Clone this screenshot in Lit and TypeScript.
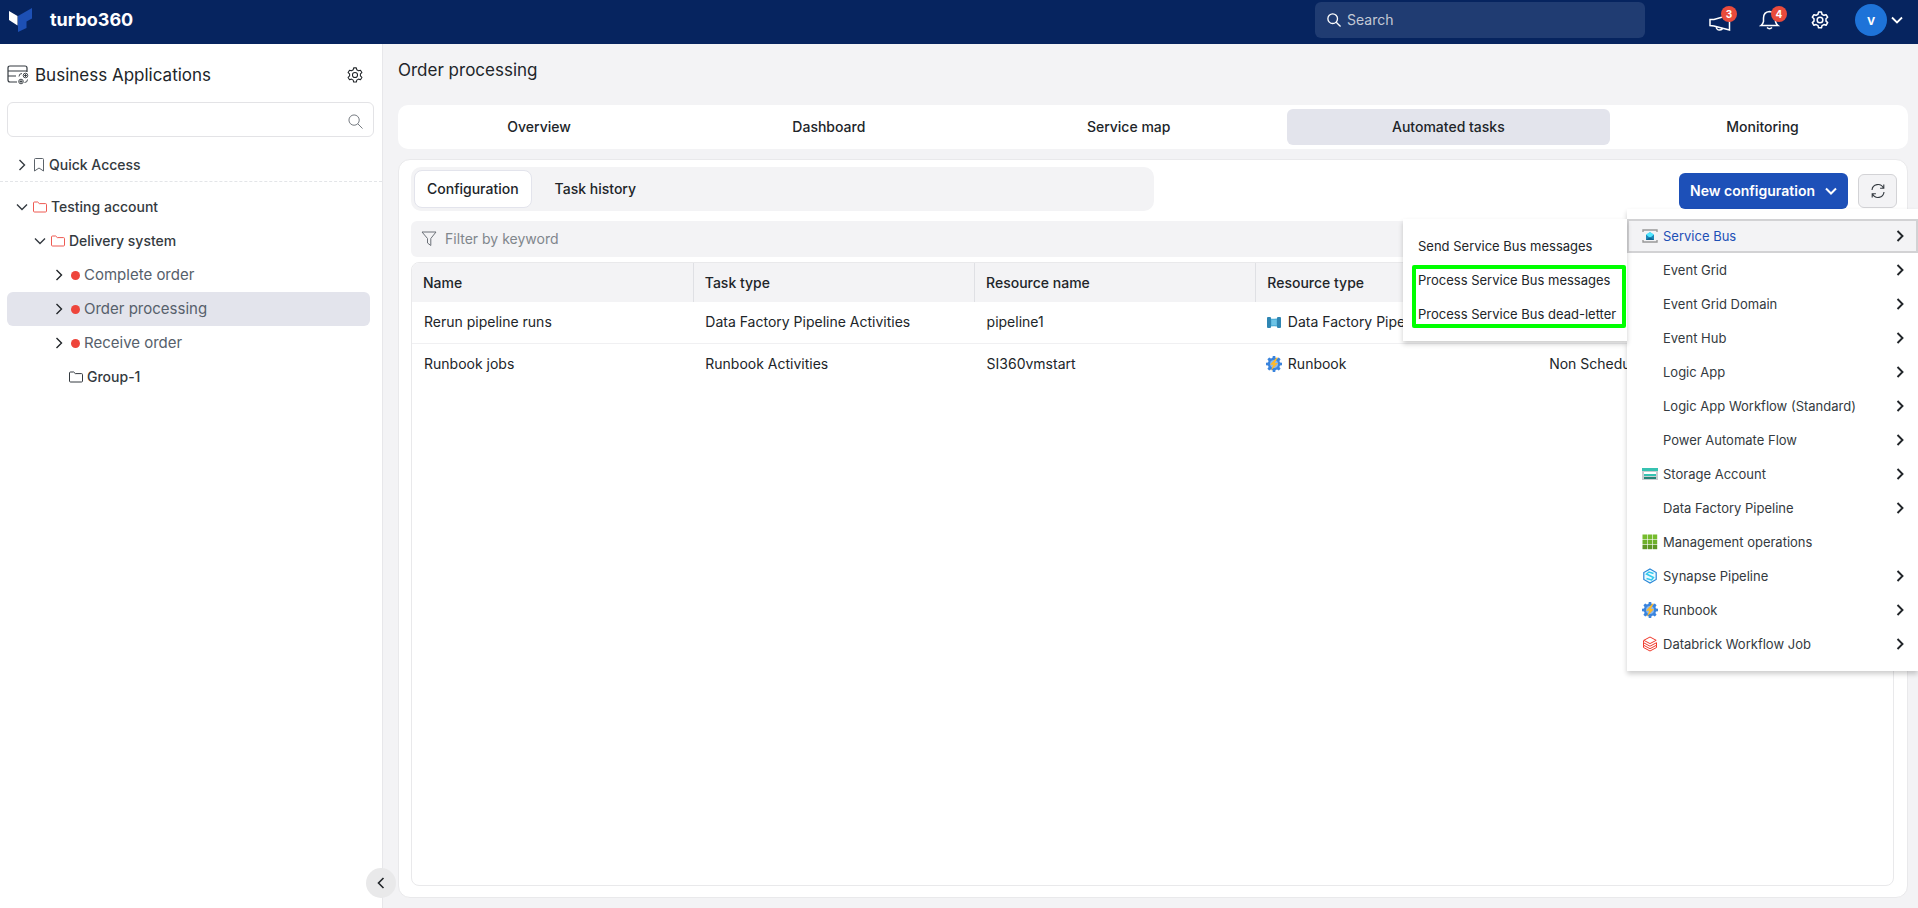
import { LitElement, html, css, svg, nothing } from "lit";
import { customElement, state } from "lit/decorators.js";
import { classMap } from "lit/directives/class-map.js";

const gear = html`<svg class="gear" viewBox="0 0 24 24" fill="none" stroke="currentColor" stroke-linejoin="round">
  <path d="M9.600 4.200 10.200 1.600h3.600l.6 2.600 2.300 1.300 2.600-.8 1.900 3.100-2 1.800v2.800l2 1.900-1.900 3.100-2.600-.8-2.300 1.300-.6 2.600h-3.600l-.6-2.600-2.300-1.300-2.600.8-1.900-3.100 2-1.900V9.600l-2-1.800 1.900-3.100 2.600.8z" transform="translate(0 .9)"/>
  <circle cx="12" cy="12" r="3.400"/>
</svg>`;

const chevron = html`<svg class="chevron" viewBox="0 0 12 12" width="12" height="12" fill="none" stroke="currentColor"><path d="M3.500 1l5 5-5 5"/></svg>`;

const search = html`<svg class="search-icon" viewBox="0 0 16 16" width="16" height="16" fill="none" stroke="currentColor"><circle cx="6.500" cy="6.500" r="5.500"/><path d="M10.500 10.500l5 5"/></svg>`;

const folder = html`<svg class="folder" viewBox="0 0 14 12" width="14" height="12" fill="none" stroke="currentColor"><path d="M.5 10V2q0-1 1-1h3.200l1.600 1.600h6.200q1 0 1 1V10q0 1-1 1h-11q-1 0-1-1z"/></svg>`;

const icons: Record<string, unknown> = {
  bus: svg`<path d="M1 4V2h14v2M1 12v2h14v-2" fill="none" stroke="#999" stroke-width="1.400"/><path d="M4 7l4-2.800L12 7v5H4z" fill="#1c87b8"/><path d="M4 6.500L8 4l4 2.500L8 10z" fill="#50e6ff"/><path d="M4 12l4-3 4 3z" fill="#0f6391"/>`,
  storage: svg`<path d="M0 2h16v12H0z" fill="#c9cdd0"/><path d="M0 2h16v3H0z" fill="#37c2b1"/><path d="M2 6h12v2H2z" fill="#fff"/><path d="M2 8h12v2H2z" fill="#37c2b1"/><path d="M2 11h12v2H2z" fill="#258277"/>`,
  grid: svg`${[0, 1, 2].map((r) => [0, 1, 2].map((c) => svg`<rect x=${0.5 + c * 5.1} y=${0.5 + r * 5.1} width="4.500" height="4.500" fill=${["#76bc2d", "#6fb02b", "#5e9624"][r]}/>`))}`,
  synapse: svg`<path d="M8 1l6.200 3.500v7L8 15l-6.200-3.500v-7z" fill="#eafaff" stroke="#2b88d8" stroke-width="1.200"/><path d="M11.500 5.500L7 4 4.500 6l7 3.500-2 2.500-5-1.500" fill="none" stroke="#32c8ee" stroke-width="1.500"/>`,
  runbook: svg`<path d="M6.800 0h2.400l.4 2 1.500.6 1.700-1.200 1.800 1.800-1.200 1.700.6 1.500 2 .4v2.400l-2 .4-.6 1.500 1.200 1.700-1.800 1.800-1.700-1.200-1.500.6-.4 2H6.800l-.4-2-1.500-.6-1.700 1.200-1.800-1.800 1.200-1.700L2 9.600l-2-.4V6.800l2-.4.6-1.500-1.200-1.700 1.800-1.800 1.700 1.200L6.400 2z" fill="#3a84dd"/><circle cx="8" cy="8" r="4" fill="#8bb9f0"/><path d="M10.500 1.500L4 8.700h3.200L4.700 15 12 7H8.800l3-5.500z" fill="#fdb92c"/>`,
  databricks: svg`<g fill="none" stroke="#f0392b" stroke-width="1"><path d="M8 1l6.200 3.300L8 7.600 1.800 4.300z"/><path d="M1.500 4.500v2.200L8 10.200l6.500-3.500"/><path d="M1.500 6.700V9.200L8 12.700l6.500-3.500V6.700"/><path d="M1.500 9.200v2.300L8 15l6.500-3.500V9.200"/></g>`,
  factory: svg`<path d="M2 4q6 1.500 12 0v9q-6-1.500-12 0z" fill="#4fb0d8"/><rect x="1" y="3" width="4" height="11" rx="1" fill="#2f86b3"/><rect x="11" y="3" width="4" height="11" rx="1" fill="#2f86b3"/><path d="M5.500 6h5v5h-5z" fill="#6cc3e6"/>`,
};

const icon = (name?: string) => html`<svg class="service" viewBox="0 0 16 16" width="16" height="16" aria-hidden="true">${name ? icons[name] : nothing}</svg>`;

interface Entry { label: string; icon?: string; leaf?: boolean }

const services: Entry[] = [
  { label: "Service Bus", icon: "bus" },
  { label: "Event Grid" },
  { label: "Event Grid Domain" },
  { label: "Event Hub" },
  { label: "Logic App" },
  { label: "Logic App Workflow (Standard)" },
  { label: "Power Automate Flow" },
  { label: "Storage Account", icon: "storage" },
  { label: "Data Factory Pipeline" },
  { label: "Management operations", icon: "grid", leaf: true },
  { label: "Synapse Pipeline", icon: "synapse" },
  { label: "Runbook", icon: "runbook" },
  { label: "Databrick Workflow Job", icon: "databricks" },
];

const reset = css`
  * { box-sizing: border-box; }
  button, input { font: inherit; color: inherit; }
  button { border: 0; padding: 0; background: none; text-align: left; cursor: pointer; }
  input { outline: none; min-width: 0; }
  ul { list-style: none; margin: 0; padding: 0; }
  svg { display: block; flex: none; }
`;

@customElement("top-bar")
class TopBar extends LitElement {
  static styles = [reset, css`
    :host { display: block; }
    .bar { height: 44px; display: flex; align-items: center; background: #06245f; color: #fff; padding: 0 15px 4px 8px; }
    .brand { display: flex; align-items: center; gap: 17px; margin-right: auto; font: 700 18px/24px Inter, sans-serif; color: #fff; text-decoration: none; }
    .search { width: 330px; height: 36px; margin-right: 63px; display: flex; align-items: center; gap: 4px; padding: 0 12px; background: #203c72; border-radius: 6px; }
    .search .search-icon { width: 14px; height: 14px; stroke-width: 1.500; }
    .search input { flex: 1; border: 0; background: none; font-size: 14px; }
    .search input::placeholder { color: #c3c9d5; opacity: 1; }
    .tools { display: flex; align-items: center; gap: 26px; }
    .tool { position: relative; width: 24px; height: 24px; display: grid; place-items: center; }
    .tool .gear { width: 20px; height: 20px; stroke-width: 1.800; }
    .badge { position: absolute; top: -2px; right: -5px; width: 16px; height: 16px; border-radius: 8px; background: #e94b3c; font: 700 10px/16px Inter, sans-serif; text-align: center; }
    .user { display: flex; align-items: center; gap: 4px; margin-left: -3px; }
    .avatar { width: 32px; height: 32px; border-radius: 16px; background: #1e73d8; font: 600 14px/32px Inter, sans-serif; text-align: center; }
    .user .chevron { transform: rotate(90deg); stroke-width: 1.800; }
  `];

  render() {
    return html`<header class="bar">
      <a class="brand" href="#">
        <svg width="25" height="25" viewBox="0 0 25 25"><path d="M1 3l8.500 5v9.500L1 12z" fill="#fff"/><path d="M10 8L24 0v10.500l-5.500 3v6.500L10 24z" fill="#1d50b5"/></svg>
        <span>turbo360</span>
      </a>
      <label class="search">${search}<input type="text" placeholder="Search" aria-label="Search"></label>
      <div class="tools">
        <button class="tool" aria-label="Announcements">
          <svg width="24" height="24" viewBox="0 0 24 24" fill="none" stroke="#fff" stroke-width="1.500"><path d="M2 11.500v6l4 .5 15.500 4V7L6 11.500zM8 18.500q.5 3.500 3.500 3.500t3-2.500"/></svg>
          <span class="badge">3</span>
        </button>
        <button class="tool" aria-label="Notifications">
          <svg width="22" height="22" viewBox="0 0 22 22" fill="none" stroke="#fff" stroke-width="1.500"><path d="M2 16.500q2-1.500 2.500-4V9q0-6 6-6.500 6 .5 6 6.500v3.500q.5 2.500 2.500 4zM8 18.500q2.500 2.500 5 0"/></svg>
          <span class="badge">4</span>
        </button>
        <button class="tool" aria-label="Settings">${gear}</button>
        <button class="user" aria-label="Account"><span class="avatar">v</span>${chevron}</button>
      </div>
    </header>`;
  }
}

@customElement("app-tree")
class AppTree extends LitElement {
  static styles = [reset, css`
    :host { display: block; background: #fff; border-right: 1px solid #e7e7ea; position: relative; }
    .head { display: flex; align-items: center; gap: 6px; padding: 12px 18px 0 7px; height: 50px; }
    .head h1 { flex: 1; margin: 0; font-size: 17px; font-weight: 400; line-height: 24px; color: #212529; }
    .head .gear { width: 18px; height: 18px; stroke-width: 1.400; }
    .find { margin: 8px 8px 0 7px; height: 35px; display: flex; align-items: center; border: 1px solid #e3e3e6; border-radius: 6px; padding: 4px 10px 0 10px; color: #6c7178; }
    .find input { flex: 1; border: 0; background: none; }
    .find .search-icon { width: 15px; height: 15px; }
    .row { width: 100%; height: 34px; display: flex; align-items: center; font-size: 14px; font-weight: 500; color: #343a40; border-radius: 6px; }
    .row span { white-space: nowrap; }
    .row .chevron { margin-right: 5px; stroke-width: 1.400; }
    .row .folder { margin-right: 4px; }
    .quick { height: 45px; border-bottom: 1px dashed #e3e5e8; border-radius: 0; padding: 12px 0 0 16px; }
    .quick .mark { margin-right: 4px; }
    .tree { padding: 8px 12px 0 7px; }
    .l1 { padding-left: 9px; }
    .l2 { padding-left: 27px; }
    .l3 { padding-left: 46px; font-size: 15px; font-weight: 400; color: #56606b; }
    .l3 .chevron { color: #212529; }
    .l3.group { padding-left: 62px; font-size: 14px; font-weight: 500; color: #343a40; }
    .open .chevron { transform: rotate(90deg); }
    .alert { color: #ee5a52; }
    .dot { width: 9px; height: 9px; border-radius: 5px; background: #ee453b; margin: 0 4px 0 1px; }
    .selected { background: #e3e4ec; }
    .collapse { position: absolute; right: -14px; bottom: 10px; z-index: 2; width: 30px; height: 30px; border-radius: 15px; background: #e9e9ea; display: grid; place-items: center; }
    .collapse .chevron { transform: rotate(180deg); stroke-width: 1.600; }
  `];

  @state() selected = "Order processing";

  render() {
    return html`
      <div class="head">
        <svg width="22" height="20" viewBox="0 0 22 20" fill="none" stroke="#343a40" stroke-width="1.200"><path d="M10 17H3q-2 0-2-2V3q0-2 2-2h15q2 0 2 2v4M1 6h19M1 11h8"/><g stroke-width=".9"><circle cx="18.500" cy="10.500" r="2.300"/><circle cx="14" cy="16.500" r="2.300"/><path d="M15 8.500q-3 0-3 3M17.500 17.500q3 0 3-3M17 10.500h3M18.500 9v3M12.500 16.500h3M14 15v3"/></g></svg>
        <h1>Business Applications</h1>
        <button aria-label="Application settings">${gear}</button>
      </div>
      <label class="find"><input type="text" aria-label="Find an application">${search}</label>
      <button class="row quick">${chevron}
        <svg class="mark" width="12" height="14" viewBox="0 0 12 14" fill="none" stroke="#5c636a"><path d="M1.500 13V1.500q0-1 1-1h7q1 0 1 1V13L6 10z"/></svg>
        <span>Quick Access</span></button>
      <ul class="tree">
        <li><button class="row l1 open">${chevron}<i class="alert">${folder}</i><span>Testing account</span></button></li>
        <li><button class="row l2 open">${chevron}<i class="alert">${folder}</i><span>Delivery system</span></button></li>
        ${["Complete order", "Order processing", "Receive order"].map((name) => html`<li>
          <button class=${classMap({ row: true, l3: true, selected: name === this.selected })} @click=${() => (this.selected = name)}>
            ${chevron}<i class="dot"></i><span>${name}</span></button></li>`)}
        <li><button class="row l3 group">${folder}<span>Group-1</span></button></li>
      </ul>
      <button class="collapse" aria-label="Collapse sidebar">${chevron}</button>`;
  }
}

@customElement("config-menu")
class ConfigMenu extends LitElement {
  static styles = [reset, css`
    :host { display: block; position: absolute; top: 100%; right: -21px; z-index: 3; width: 291px; font-size: 13px; font-weight: 400; color: #343a40; }
    .menu, .sub { background: #fff; padding: 10px 0; box-shadow: 0 3px 5px rgba(0, 0, 0, 0.2); }
    .item { width: 100%; height: 34px; display: flex; align-items: center; gap: 5px; padding: 0 10px 0 13px; border: 2px solid transparent; white-space: nowrap; }
    .item span { flex: 1; }
    .chevron { stroke-width: 1.900; color: #212529; }
    .anchor { position: relative; }
    .current { background: #f3f3f5; border-color: #d2d2d4; color: #1d4fb5; }
    .sub { position: absolute; top: 0; right: 100%; width: 224px; }
    .sub .item { padding: 0 13px; color: #212529; }
    .marked { position: relative; }
    .marked::after { content: ""; position: absolute; inset: 2px 1px 3px 9px; border: 4px solid #00ff00; border-radius: 2px; pointer-events: none; }
  `];

  render() {
    return html`<ul class="menu" role="menu">
      ${services.map((entry, index) => html`<li class="anchor" role="none">
        <button class=${classMap({ item: true, current: index === 0 })} role="menuitem">
          ${icon(entry.icon)}<span>${entry.label}</span>${entry.leaf ? nothing : chevron}</button>
        ${index === 0 ? html`<div class="sub" role="menu">
          <button class="item" role="menuitem">Send Service Bus messages</button>
          <div class="marked">
            <button class="item" role="menuitem">Process Service Bus messages</button>
            <button class="item" role="menuitem">Process Service Bus dead-letter</button>
          </div>
        </div>` : nothing}
      </li>`)}
    </ul>`;
  }
}

@customElement("task-panel")
class TaskPanel extends LitElement {
  static styles = [reset, css`
    :host { display: flex; flex-direction: column; min-height: 0; background: #fff; border: 1px solid #e9e9eb; border-radius: 12px; padding: 7px 13px 11px 12px; }
    .top { display: flex; align-items: center; justify-content: space-between; margin-right: -3px; }
    .switch { width: 50%; height: 44px; display: flex; align-items: center; gap: 10px; background: #f3f3f5; border-radius: 10px; padding: 3px; }
    .switch button { height: 38px; padding: 0 12px; border: 1px solid transparent; border-radius: 8px; font-size: 14px; font-weight: 500; }
    .switch .on { background: #fff; border-color: #e3e4ec; }
    .actions { position: relative; display: flex; gap: 10px; align-items: center; padding-top: 4px; }
    .new { display: flex; align-items: center; gap: 10px; height: 36px; padding: 0 11px; background: #1d50b8; border-radius: 6px; color: #fff; font-size: 14px; font-weight: 600; }
    .new .chevron { transform: rotate(90deg); stroke-width: 2; }
    .refresh { width: 39px; height: 34px; display: grid; place-items: center; border: 1px solid #d3d3d6; border-radius: 6px; background: #f3f3f5; }
    .filter { margin-top: 10px; height: 36px; display: flex; align-items: center; gap: 6px; padding: 0 10px; border-radius: 6px; background: #f3f3f5; }
    .filter input { flex: 1; border: 0; background: none; font-size: 14px; }
    .filter input::placeholder { color: #80868c; opacity: 1; }
    .frame { flex: 1; min-height: 0; margin-top: 5px; border: 1px solid #e9e9eb; border-radius: 8px; overflow: hidden; }
    table { width: 100%; table-layout: fixed; border-collapse: collapse; font-size: 14px; }
    .wide { width: 19%; }
    th { height: 39px; padding: 0 11px; background: #f3f3f5; border-right: 1px solid #dfe0e4; font-weight: 500; text-align: left; }
    td { height: 41px; padding: 0 12px; border-bottom: 1px solid #f0f0f2; white-space: nowrap; overflow: hidden; }
    tr:last-child td { border-bottom: 0; }
    .type { display: flex; align-items: center; gap: 6px; margin-left: -2px; }
  `];

  render() {
    const rows = [
      ["Rerun pipeline runs", "Data Factory Pipeline Activities", "pipeline1", "factory", "Data Factory Pipeline", ""],
      ["Runbook jobs", "Runbook Activities", "SI360vmstart", "runbook", "Runbook", "Non Scheduled"],
    ];
    return html`
      <div class="top">
        <div class="switch"><button class="on">Configuration</button><button>Task history</button></div>
        <div class="actions">
          <button class="new" aria-haspopup="menu" aria-expanded="true">New configuration ${chevron}</button>
          <button class="refresh" aria-label="Refresh">
            <svg width="16" height="16" viewBox="0 0 16 16" fill="none" stroke="#343a40" stroke-width="1.100"><path d="M2 7a6 6 0 0 1 11.400-2M14 9a6 6 0 0 1-11.400 2M13.800 1.500V5.200h-3.700M2.200 14.500v-3.700h3.700"/></svg>
          </button>
          <config-menu></config-menu>
        </div>
      </div>
      <label class="filter">
        <svg width="16" height="16" viewBox="0 0 16 16" fill="none" stroke="#6c7178"><path d="M1 1h14L9.800 7.500v7L6.500 12V7.500z"/></svg>
        <input type="text" placeholder="Filter by keyword" aria-label="Filter by keyword">
      </label>
      <div class="frame">
        <table>
          <colgroup><col class="wide"><col class="wide"><col class="wide"><col class="wide"><col class="wide"><col></colgroup>
          <thead><tr><th>Name</th><th>Task type</th><th>Resource name</th><th>Resource type</th><th></th><th></th></tr></thead>
          <tbody>${rows.map((r) => html`<tr>
            <td>${r[0]}</td><td>${r[1]}</td><td>${r[2]}</td>
            <td><div class="type">${icon(r[3])}<span>${r[4]}</span></div></td>
            <td>${r[5]}</td><td></td></tr>`)}</tbody>
        </table>
      </div>`;
  }
}

@customElement("app-root")
class AppRoot extends LitElement {
  static styles = [reset, css`
    :host { display: grid; grid-template: auto minmax(0, 1fr) / 383px minmax(0, 1fr); height: 100vh; overflow: hidden; background: #f3f3f5; color: #212529; font: 400 14px/20px Inter, "Noto Sans", sans-serif; }
    .header { grid-column: 1 / -1; }
    .main { display: flex; flex-direction: column; padding: 0 10px 10px 15px; min-width: 0; }
    .title { margin: 0; height: 61px; padding-top: 14px; font-size: 17px; font-weight: 400; line-height: 24px; }
    .tabs { display: flex; gap: 11px; padding: 4px; height: 44px; background: #fff; border-radius: 10px; margin-bottom: 10px; }
    .tab { flex: 1 1 auto; border-radius: 6px; text-align: center; font-size: 14px; font-weight: 500; }
    .active { background: #e3e4ec; }
    .panel { flex: 1; }
  `];

  @state() tab = "Automated tasks";

  render() {
    return html`
      <top-bar class="header"></top-bar>
      <app-tree></app-tree>
      <main class="main">
        <h2 class="title">Order processing</h2>
        <nav class="tabs">
          ${["Overview", "Dashboard", "Service map", "Automated tasks", "Monitoring"].map((name) => html`<button
            class=${classMap({ tab: true, active: name === this.tab })} @click=${() => (this.tab = name)}>${name}</button>`)}
        </nav>
        <task-panel class="panel"></task-panel>
      </main>`;
  }
}
